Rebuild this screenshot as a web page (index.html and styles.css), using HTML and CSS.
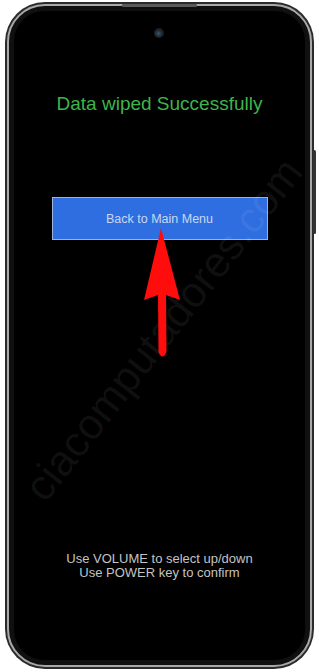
FILE: index.html
```html
<!DOCTYPE html>
<html>
<head>
<meta charset="utf-8">
<link rel="stylesheet" href="styles.css">
</head>
<body>
<div class="phone">
  <div class="side-key"></div>
  <div class="speaker"></div>
  <div class="frame">
    <div class="screen">
      <div class="camera"></div>
      <h1 class="title">Data wiped Successfully</h1>
      <div class="menu-btn">Back to Main Menu</div>
      <div class="hint">
        <div>Use VOLUME to select up/down</div>
        <div>Use POWER key to confirm</div>
      </div>
    </div>
  </div>
</div>
<div class="watermark">ciacomputadores.com</div>
<svg class="arrow" width="319" height="672" viewBox="0 0 319 672">
  <path d="M161,228 L180,300 L166,295 L166.5,352 Q162.5,361 158.5,352 L158,295 L144,300 Z" fill="#ff0d0d"/>
</svg>
</body>
</html>
```
FILE: styles.css
```css
html, body {
  margin: 0;
  padding: 0;
  background: #ffffff;
  width: 319px;
  height: 672px;
  overflow: hidden;
  position: relative;
  font-family: "Liberation Sans", Arial, sans-serif;
}

.phone {
  position: relative;
  margin: 2px 0 0 5px;
  width: 309px;
  height: 667px;
  box-sizing: border-box;
  border-radius: 40px;
  background: #2b2b2b;
  padding: 2px;
}

.frame {
  height: 100%;
  box-sizing: border-box;
  border-radius: 38px;
  border: 2px solid #a9a9a9;
  background: #101010;
  padding: 5px;
}

.screen {
  position: relative;
  height: 100%;
  box-sizing: border-box;
  border-radius: 30px;
  background: #000000;
  display: flex;
  flex-direction: column;
  align-items: center;
}

.speaker {
  position: absolute;
  top: 2px;
  left: 117px;
  width: 75px;
  height: 3px;
  background: #5a5a5a;
  border-radius: 1px;
}

.side-key {
  position: absolute;
  right: -2px;
  top: 148px;
  width: 3px;
  height: 84px;
  background: #333;
  border-radius: 2px;
}

.camera {
  position: absolute;
  top: 17px;
  left: 140px;
  width: 10px;
  height: 10px;
  border-radius: 50%;
  background: radial-gradient(circle at 45% 55%, #3f5666 0, #1b2630 45%, #0d1116 100%);
}

.title {
  margin: 82px 0 0;
  font-size: 19px;
  line-height: 22px;
  font-weight: normal;
  color: #3fb44a;
  white-space: nowrap;
}

.menu-btn {
  margin-top: 82px;
  width: 216px;
  height: 43px;
  box-sizing: border-box;
  border: 1px solid #9bb3dd;
  background: #2f6ee0;
  color: #c9d8f0;
  font-size: 12.5px;
  display: flex;
  align-items: center;
  justify-content: center;
}

.hint {
  margin-top: 312px;
  font-size: 13px;
  line-height: 14px;
  color: #c4c4c4;
  text-align: center;
}

.watermark {
  position: absolute;
  left: -52px;
  top: 304px;
  width: 430px;
  text-align: center;
  font-size: 43px;
  line-height: 50px;
  color: rgba(255, 255, 255, 0.07);
  transform: rotate(-52deg);
  white-space: nowrap;
  pointer-events: none;
}

.arrow {
  position: absolute;
  left: 0;
  top: 0;
  pointer-events: none;
}
```
